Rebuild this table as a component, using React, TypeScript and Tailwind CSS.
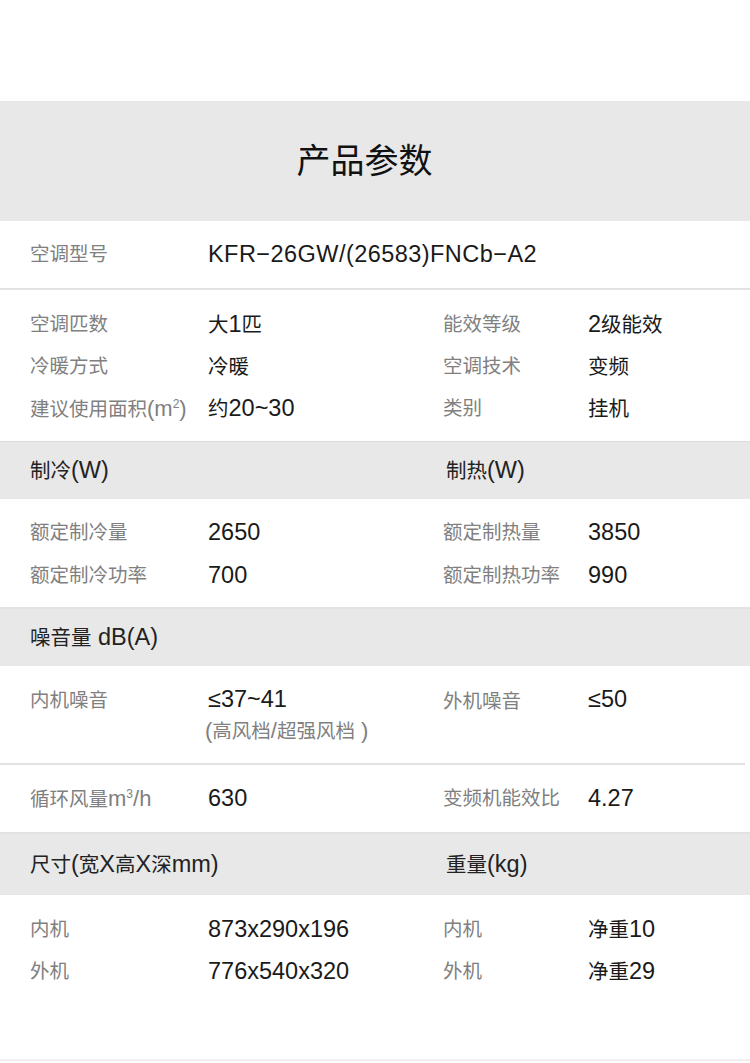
import React from "react";

const FONT = '"Liberation Sans", "Noto Sans CJK SC", sans-serif';

function Mixed({ text, cjk, latin }: { text: string; cjk: string; latin: string }) {
  const parts = text.match(/[\u3000-\u9fff\uff00-\uffef]+|[^\u3000-\u9fff\uff00-\uffef]+/g) || [];
  return (
    <>
      {parts.map((p, i) =>
        /[\u3000-\u9fff\uff00-\uffef]/.test(p) ? (
          <span key={i} className={cjk}>
            {p}
          </span>
        ) : (
          <span key={i} className={latin}>
            {p}
          </span>
        )
      )}
    </>
  );
}

const L = ({ t }: { t: string }) => <Mixed text={t} cjk="text-[19.5px]" latin="text-[22px]" />;
const V = ({ t }: { t: string }) => <Mixed text={t} cjk="text-[20.5px]" latin="text-[23.5px]" />;
const H = ({ t }: { t: string }) => <Mixed text={t} cjk="text-[20.5px]" latin="text-[23.5px]" />;

function Row({
  a,
  av,
  b,
  bv,
  h = "h-[42px]",
}: {
  a: React.ReactNode;
  av: string;
  b: React.ReactNode;
  bv: string;
  h?: string;
}) {
  return (
    <div className={`flex items-center ${h} leading-none`}>
      <div className="w-[208px] pl-[30px] text-[#808080] shrink-0">{a}</div>
      <div className="w-[235px] text-[#1a1a1a] shrink-0">
        <V t={av} />
      </div>
      <div className="w-[145px] text-[#808080] shrink-0">{b}</div>
      <div className="text-[#1a1a1a]">
        <V t={bv} />
      </div>
    </div>
  );
}

function GrayHead({ a, b, h }: { a: string; b?: string; h: string }) {
  return (
    <div className={`flex items-center bg-[#e8e8e8] ${h} text-[#222] leading-none`}>
      <div className="w-[446px] pl-[30px] shrink-0">
        <H t={a} />
      </div>
      {b && (
        <div>
          <H t={b} />
        </div>
      )}
    </div>
  );
}

export default function App() {
  return (
    <div className="w-[750px] h-[1063px] bg-white overflow-hidden" style={{ fontFamily: FONT }}>
      <div className="h-[101px]" />
      <div className="h-[120px] bg-[#e8e8e8] flex items-center justify-center pr-[21px] text-[34px] text-[#111]">
        产品参数
      </div>
      <div className="h-[69px] border-b-2 border-[#e2e2e2] flex items-center leading-none">
        <div className="w-[208px] pl-[30px] text-[#808080]">
          <L t="空调型号" />
        </div>
        <div className="text-[23.5px] text-[#1a1a1a] tracking-[0.45px]">KFR−26GW/(26583)FNCb−A2</div>
      </div>
      <div className="pt-[14px] pb-[11px] border-b border-[#dcdcdc]">
        <Row a={<L t="空调匹数" />} av="大1匹" b={<L t="能效等级" />} bv="2级能效" />
        <Row a={<L t="冷暖方式" />} av="冷暖" b={<L t="空调技术" />} bv="变频" />
        <Row
          a={
            <>
              <L t="建议使用面积(m" />
              <span className="text-[12px] relative -top-[8px]">2</span>
              <L t=")" />
            </>
          }
          av="约20~30"
          b={<L t="类别" />}
          bv="挂机"
        />
      </div>
      <GrayHead a="制冷(W)" b="制热(W)" h="h-[57px]" />
      <div className="pt-[12px] pb-[10px] border-b-2 border-[#e2e2e2]">
        <Row a={<L t="额定制冷量" />} av="2650" b={<L t="额定制热量" />} bv="3850" h="h-[43px]" />
        <Row a={<L t="额定制冷功率" />} av="700" b={<L t="额定制热功率" />} bv="990" h="h-[43px]" />
      </div>
      <GrayHead a="噪音量 dB(A)" h="h-[57px]" />
      <div className="w-[745px] border-b-2 border-[#e2e2e2] h-[99px] pt-[19px]">
        <div className="flex items-start">
          <div className="w-[208px] pl-[30px] text-[#808080] shrink-0 leading-[30px]">
            <L t="内机噪音" />
          </div>
          <div className="w-[235px] shrink-0">
            <div className="text-[#1a1a1a] leading-[29px]">
              <V t="≤37~41" />
            </div>
            <div className="text-[#808080] leading-[29px] -ml-[3px]">
              <L t="(高风档/超强风档 )" />
            </div>
          </div>
          <div className="w-[145px] text-[#808080] shrink-0 leading-[30px] pt-[1px]">
            <L t="外机噪音" />
          </div>
          <div className="text-[#1a1a1a] leading-[29px]">
            <V t="≤50" />
          </div>
        </div>
      </div>
      <div className="h-[69px] border-b-2 border-[#e2e2e2] flex items-center">
        <Row
          a={
            <>
              <L t="循环风量m" />
              <span className="text-[12px] relative -top-[8px]">3</span>
              <L t="/h" />
            </>
          }
          av="630"
          b={<L t="变频机能效比" />}
          bv="4.27"
        />
      </div>
      <GrayHead a="尺寸(宽X高X深mm)" b="重量(kg)" h="h-[61px]" />
      <div className="h-[166px] pt-[14px] border-b-2 border-[#efefef]">
        <Row a={<L t="内机" />} av="873x290x196" b={<L t="内机" />} bv="净重10" />
        <Row a={<L t="外机" />} av="776x540x320" b={<L t="外机" />} bv="净重29" />
      </div>
    </div>
  );
}
